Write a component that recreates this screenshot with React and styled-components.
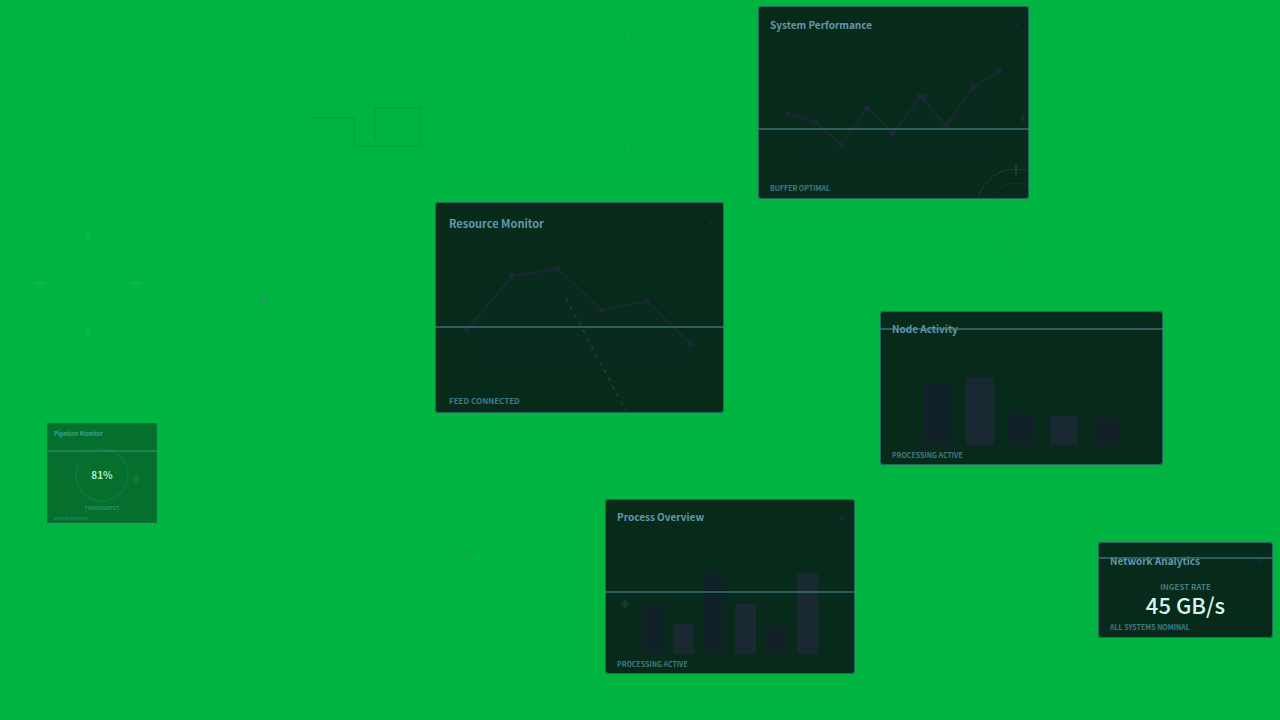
import React from "react";
import styled, { createGlobalStyle } from "styled-components";

const GlobalStyle = createGlobalStyle`
  * { box-sizing: border-box; }
  body {
    margin: 0;
    background: #00b441;
    font-family: "Noto Sans CJK SC", "Open Sans", sans-serif;
  }
  h2, p { margin: 0; }
`;

const Canvas = styled.main`
  position: relative;
  width: 100%;
  min-height: 100vh;
  overflow: hidden;
`;

const Overlay = styled.svg`
  position: absolute;
  top: 0;
  left: 0;
  pointer-events: none;
  fill: none;
`;

const Window = styled.section`
  position: absolute;
  left: ${(p) => p.$x}px;
  top: ${(p) => p.$y}px;
  width: ${(p) => p.$w}px;
  height: ${(p) => p.$h}px;
  display: flex;
  flex-direction: column;
  border-radius: ${(p) => (p.$mini ? 1 : 4)}px;
  background: ${(p) => (p.$mini ? "rgba(9, 42, 28, 0.5)" : "#082a1b")};
  box-shadow: inset 0 0 0 1px
    ${(p) => (p.$mini ? "rgba(50, 120, 110, 0.2)" : "#28675c")};
`;

const Header = styled.header`
  flex: none;
  display: flex;
  align-items: center;
  justify-content: space-between;
  height: ${(p) => p.$h}px;
  padding: 0 ${(p) => (p.$mini ? 6 : 10)}px ${(p) => (p.$mini ? 0 : 2)}px ${(p) => p.$pad}px;
`;

const Title = styled.h2`
  font-size: ${(p) => p.$size}px;
  line-height: 16px;
  font-weight: 700;
  white-space: nowrap;
  color: ${(p) => (p.$mini ? "#3da386" : "#6297ad")};
`;

const StatusDot = styled.span`
  width: 5px;
  height: 5px;
  border-radius: 50%;
  background: ${(p) => (p.$mini ? "#087035" : "#182638")};
`;

const Body = styled.div`
  flex: 1;
  min-height: 0;
  display: flex;
  justify-content: center;
`;

const Footer = styled.footer`
  flex: none;
  display: flex;
  align-items: center;
  height: ${(p) => p.$h}px;
  padding-left: ${(p) => p.$pad}px;
  font-size: ${(p) => p.$size}px;
  line-height: 12px;
  font-weight: 700;
  white-space: nowrap;
  color: ${(p) => (p.$mini ? "#238a60" : "#407c84")};
`;

const ScanLine = styled.div`
  position: absolute;
  left: 0;
  right: 0;
  top: ${(p) => p.$top}px;
  height: 2px;
  background: ${(p) => (p.$mini ? "rgba(60, 150, 110, 0.5)" : "rgba(70, 130, 135, 0.6)")};
`;

const Bars = styled.div`
  display: flex;
  align-items: flex-end;
  gap: ${(p) => p.$gap}px;
`;

const Bar = styled.div`
  width: ${(p) => p.$w}px;
  background: ${(p) => (p.$light ? "#1a2831" : "#102128")};
`;

const Metric = styled.div`
  display: flex;
  flex-direction: column;
  align-items: center;
`;

const MetricLabel = styled.p`
  font-size: 8px;
  line-height: 12px;
  font-weight: 700;
  color: #407c84;
`;

const MetricValue = styled.p`
  font-size: 22px;
  line-height: 22px;
  font-weight: 500;
  color: #d4f6ee;
`;

const Gauge = styled.div`
  display: flex;
  flex-direction: column;
  align-items: center;
`;

const Dial = styled.div`
  display: grid;
  place-items: center;
  width: 60px;
  height: 58px;

  > * { grid-area: 1 / 1; }
`;

const DialValue = styled.p`
  font-size: 10px;
  line-height: 14px;
  font-weight: 700;
  color: #a9ebc9;
`;

const GaugeLabel = styled.p`
  font-size: 5px;
  line-height: 10px;
  font-weight: 700;
  color: #2a9466;
`;

function Panel({ x, y, w, h, title, titleSize = 10, head, foot, footSize = 7, status, scan, mini, children }) {
  const pad = mini ? 7 : head > 42 ? 14 : 12;
  return (
    <Window $x={x} $y={y} $w={w} $h={h} $mini={mini}>
      <Header $h={head} $pad={pad} $mini={mini}>
        <Title $size={titleSize} $mini={mini}>{title}</Title>
        <StatusDot $mini={mini} />
      </Header>
      <Body>{children}</Body>
      <Footer $h={foot} $pad={pad} $size={footSize} $mini={mini}>{status}</Footer>
      <ScanLine $top={scan} $mini={mini} />
    </Window>
  );
}

function LineChart({ width, height, base, points }) {
  const path = points.map((p) => p.join(",")).join(" ");
  const first = points[0];
  const last = points[points.length - 1];
  return (
    <svg width="100%" height="100%" viewBox={`0 0 ${width} ${height}`} aria-hidden="true">
      <polygon
        points={`${first[0]},${base} ${path} ${last[0]},${base}`}
        fill="#0d2d27"
        opacity="0.3"
      />
      <polyline points={path} fill="none" stroke="#1b2834" strokeWidth="2" />
      {points.map(([cx, cy]) => (
        <circle key={cx} cx={cx} cy={cy} r="3" fill="#1b2836" />
      ))}
    </svg>
  );
}

function BarChart({ barWidth, gap, values }) {
  return (
    <Bars $gap={gap}>
      {values.map((v, i) => (
        <Bar key={i} $w={barWidth} $light={i % 2 === 1} style={{ height: v }} />
      ))}
    </Bars>
  );
}

function Reticle({ cx, cy, r, ring, tick, size = 5 }) {
  return (
    <g>
      <circle cx={cx} cy={cy} r={r} stroke={ring} />
      <path
        stroke={tick}
        strokeWidth="2"
        d={`M${cx} ${cy - r - size}v${size * 2}M${cx} ${cy + r - size}v${size * 2}M${cx - r - size} ${cy}h${size * 2}M${cx + r - size} ${cy}h${size * 2}`}
      />
    </g>
  );
}

export default function App() {
  return (
    <>
      <GlobalStyle />
      <Canvas>
        <Panel x={758} y={6} w={271} h={193} title="System Performance" head={39} foot={23} status="BUFFER OPTIMAL" scan={122}>
          <LineChart
            width={271}
            height={131}
            base={119}
            points={[[30, 69], [57, 77], [83, 99], [109, 63], [135, 88], [162, 51], [188, 80], [215, 42], [241, 26]]}
          />
        </Panel>

        <Panel x={435} y={202} w={289} h={211} title="Resource Monitor" titleSize={11} head={44} foot={24} footSize={8} status="FEED CONNECTED" scan={124}>
          <LineChart
            width={289}
            height={143}
            base={126}
            points={[[32, 84], [77, 30], [123, 23], [167, 64], [212, 55], [256, 98]]}
          />
        </Panel>

        <Panel x={880} y={311} w={283} h={154} title="Node Activity" head={37} foot={20} status="PROCESSING ACTIVE" scan={17}>
          <BarChart barWidth={28} gap={14} values={[61, 67, 32, 29, 27]} />
        </Panel>

        <Panel x={605} y={499} w={250} h={175} title="Process Overview" head={38} foot={20} status="PROCESSING ACTIVE" scan={92}>
          <BarChart barWidth={21} gap={10} values={[48, 30, 80, 50, 28, 81]} />
        </Panel>

        <Panel x={1098} y={542} w={175} h={96} title="Network Analytics" head={39} foot={22} status="ALL SYSTEMS NOMINAL" scan={15}>
          <Metric>
            <MetricLabel>INGEST RATE</MetricLabel>
            <MetricValue>45 GB/s</MetricValue>
          </Metric>
        </Panel>

        <Panel x={47} y={423} w={110} h={100} title="Pipeline Monitor" titleSize={6} head={22} foot={11} footSize={4} status="BUFFER OPTIMAL" scan={27} mini>
          <Gauge>
            <Dial>
              <svg width="60" height="60" viewBox="0 0 60 60" fill="none" aria-hidden="true">
                <circle cx="30" cy="30" r="26" stroke="#087236" strokeWidth="2" />
                <path d="M30 4a26 26 0 1 1-24 16" stroke="#0c773c" strokeWidth="2" />
              </svg>
              <DialValue>81%</DialValue>
            </Dial>
            <GaugeLabel>THROUGHPUT</GaugeLabel>
          </Gauge>
        </Panel>

        <Overlay width="100%" height="100%" aria-hidden="true">
          <Reticle cx={88} cy={283} r={48} ring="rgba(90,190,130,0.12)" tick="rgba(110,170,150,0.2)" />
          <Reticle cx={628} cy={94} r={56} ring="none" tick="rgba(100,170,140,0.1)" size={6} />
          <Reticle cx={1016} cy={208} r={39} ring="rgba(50,145,95,0.22)" tick="rgba(60,140,100,0.22)" size={6} />
          <circle cx="1016" cy="208" r="25" stroke="rgba(35,150,85,0.14)" />
          <path d="M1019 118h8M1023 114v9" stroke="rgba(60,120,95,0.22)" />
          <path d="M312 118h42v28h66v-38h-45v32" stroke="rgba(0,120,50,0.14)" strokeWidth="2" />
          <path d="M376 608v34h52v17h-14" stroke="rgba(0,120,50,0.06)" strokeWidth="2" />
          <path d="M952 491h-35v38h-37v22" stroke="rgba(0,120,50,0.06)" strokeWidth="2" />
          <path d="M566 298L626 411" stroke="rgba(60,125,95,0.5)" strokeDasharray="4 5" />
          <path d="M690 530L718 575" stroke="rgba(60,125,95,0.14)" strokeDasharray="3 5" />
          <g fill="rgba(70,140,120,0.5)">
            <circle cx="265" cy="299" r="3" />
            <circle cx="466" cy="556" r="2" />
            <circle cx="264" cy="715" r="2" />
            <circle cx="393" cy="423" r="1" />
          </g>
          <path d="M625 600l4 4-4 4-4-4z" fill="rgba(30,85,65,0.4)" stroke="rgba(30,85,65,0.2)" />
          <path d="M136 475l4 4-4 4-4-4z" fill="rgba(40,150,80,0.35)" />
          <path d="M924 93l4 3-4 4z" fill="#192a38" />
        </Overlay>
      </Canvas>
    </>
  );
}
